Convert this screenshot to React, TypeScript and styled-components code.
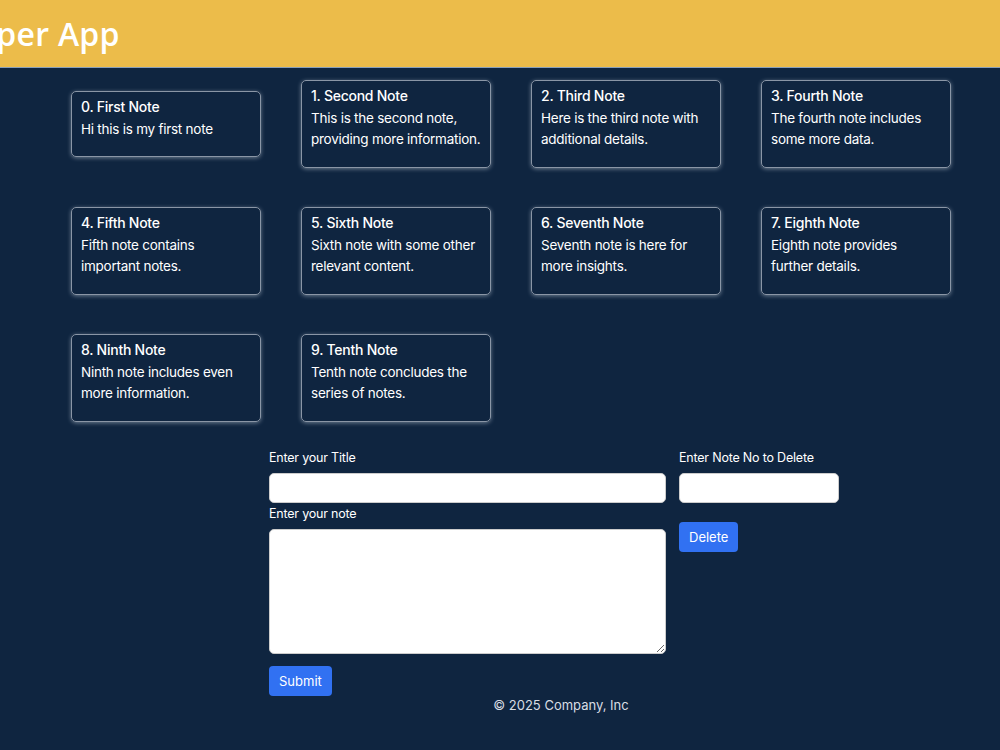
import React from "react";
import styled, { createGlobalStyle } from "styled-components";

const Global = createGlobalStyle`
  html, body { margin: 0; background: #0f2540; font-family: Inter, "Noto Sans", sans-serif; overflow: hidden; }
  * { box-sizing: border-box; }
`;
const Header = styled.header`
  height: 68px; background: #ecbc4a; border-bottom: 1px solid #8aa0b8;
  display: flex; align-items: center; overflow: hidden;
`;
const Title = styled.h1`
  margin: 0 0 0 -62px; color: #fff; font-family: "Open Sans", sans-serif; font-weight: 600; font-size: 32px; letter-spacing: 0.3px; white-space: nowrap;
`;
const Grid = styled.div`
  display: grid; grid-template-columns: repeat(4, 190px); column-gap: 40px; row-gap: 39px;
  align-items: center; padding: 12px 0 0 71px;
`;
const Card = styled.div<{ $h: number }>`
  height: ${p => p.$h}px; border: 1.5px solid #8a96a6; border-radius: 5px; padding: 4px 9px 9px;
  box-shadow: 0 1px 4px rgba(220,230,240,0.45); color: #fff; font-size: 13.5px; line-height: 21px; letter-spacing: -0.25px;
`;
const CardTitle = styled.div` font-weight: 500; margin-bottom: 2px; font-size: 14px; `;
const Form = styled.div`
  display: grid; grid-template-columns: 397px 160px; column-gap: 13px; margin: 28px 0 0 269px;
`;
const Col = styled.div` display: flex; flex-direction: column; `;
const Label = styled.label` color: #fff; font-size: 12.5px; line-height: 16px; margin-bottom: 7px; letter-spacing: -0.2px; `;
const Input = styled.input`
  height: 30px; border: 1px solid #ccc; border-radius: 5px; background: #fff; margin-bottom: 3px;
`;
const Area = styled.textarea`
  height: 125px; border: 1px solid #ccc; border-radius: 5px; background: #fff; resize: vertical;
`;
const Btn = styled.button<{ $mt: number }>`
  align-self: flex-start; height: 30px; padding: 0 10px; border: none; border-radius: 4px;
  background: #3171f2; color: #fff; font-family: Inter, sans-serif; font-size: 13px; margin-top: ${p => p.$mt}px;
`;
const Footer = styled.div` color: #d8dde4; font-size: 13px; text-align: center; margin: 1px 0 0 122px; `;

const notes = [
  ["0. First Note", "Hi this is my first note"],
  ["1. Second Note", "This is the second note, providing more information."],
  ["2. Third Note", "Here is the third note with additional details."],
  ["3. Fourth Note", "The fourth note includes some more data."],
  ["4. Fifth Note", "Fifth note contains important notes."],
  ["5. Sixth Note", "Sixth note with some other relevant content."],
  ["6. Seventh Note", "Seventh note is here for more insights."],
  ["7. Eighth Note", "Eighth note provides further details."],
  ["8. Ninth Note", "Ninth note includes even more information."],
  ["9. Tenth Note", "Tenth note concludes the series of notes."],
];

export default function App() {
  return (
    <>
      <Global />
      <Header><Title>Keeper App</Title></Header>
      <Grid>
        {notes.map(([t, b], i) => (
          <Card key={t} $h={i === 0 ? 66 : 88}>
            <CardTitle>{t}</CardTitle>
            <div>{b}</div>
          </Card>
        ))}
      </Grid>
      <Form>
        <Col>
          <Label>Enter your Title</Label>
          <Input />
          <Label>Enter your note</Label>
          <Area />
          <Btn $mt={12}>Submit</Btn>
        </Col>
        <Col>
          <Label>Enter Note No to Delete</Label>
          <Input />
          <Btn $mt={16}>Delete</Btn>
        </Col>
      </Form>
      <Footer>© 2025 Company, Inc</Footer>
    </>
  );
}
